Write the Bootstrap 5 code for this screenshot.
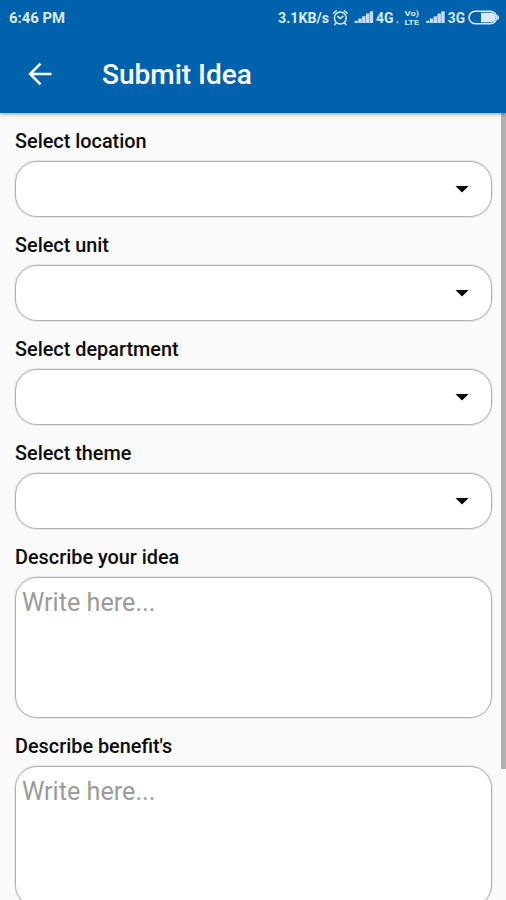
<!DOCTYPE html>
<html lang="en">
<head>
<meta charset="utf-8">
<meta name="viewport" content="width=device-width, initial-scale=1">
<title>Submit Idea</title>
<link rel="stylesheet" href="https://cdn.jsdelivr.net/npm/bootstrap@5.3.0/dist/css/bootstrap.min.css">
<style>
  body { font-family: Roboto, "Liberation Sans", sans-serif; background: #fafafa; color: #111; }
  .screen { height: 900px; }
  .app-top { height: 113px; background: #0062ac; box-shadow: 0 1px 4px rgba(0,0,0,.4); z-index: 2; }
  .status { height: 36px; padding: 0 0 0 9px; font-size: 14.9px; font-weight: 700; line-height: 36px; color: #dcebfa; }
  .status svg { flex: none; }
  .title-bar { height: 77px; padding-left: 28px; }
  .title-bar h1 { font-size: 28px; font-weight: 500; line-height: 32px; margin: 0 0 0 50px; }
  .back { width: 24px; height: 24px; line-height: 0; margin-top: -2px; }
  .form-area { padding: 0 9px 0 15px; }
  .field-label { font-size: 19.85px; font-weight: 500; line-height: 24px; height: 48px; padding: 17px 0 7px 0; margin: 0; color: #0c0c0c; }
  .field-box, .field-box:focus { display: block; width: 100%; background: #fff; border: 1px solid #b2b2b2; border-radius: 22px; box-shadow: 0 0 0 1px #e6e6e6; outline: 0; }
  .select-box { height: 56px; padding-right: 22px; }
  .area-box { height: 141px; resize: none; overflow: hidden; font-size: 25.2px; line-height: 30px; padding: 10px 6px; }
  .area-box::placeholder { color: #9b9b9b; opacity: 1; }
  .scroll-thumb { width: 5px; height: 656px; background: #b1b1b1; flex: none; }
</style>
<script src="https://cdn.jsdelivr.net/npm/bootstrap@5.3.0/dist/js/bootstrap.bundle.min.js"></script>
</head>
<body>
<div class="screen d-flex flex-column overflow-hidden">
  <header class="app-top position-relative flex-shrink-0 text-white">
    <div class="status d-flex justify-content-between">
      <span id="clock">6:46 PM</span>
      <svg width="230" height="36" viewBox="276 0 230 36" fill="#dcebfa" font-family="Roboto, sans-serif" font-weight="700">
        <text x="278" y="23" font-size="13.8" textLength="51" lengthAdjust="spacingAndGlyphs">3.1KB/s</text>
        <g fill="none" stroke="#dcebfa" stroke-width="1.5" stroke-linecap="round">
          <circle cx="340.3" cy="18" r="5.9"/>
          <path d="M333.5 13.3 336.3 10.8M347.1 13.3 344.3 10.8M335.8 23.2 334.6 24.6M344.8 23.2 346 24.6M337.7 16.4 340.3 18.6 342.9 16.4"/>
        </g>
        <g id="bars">
          <path d="M354.5 23v-2.2h3.4V23zM358.3 23v-4.4h3.4V23zM362.1 23v-6.8h3.4v6.8zM365.9 23v-9.4h3.4V23zM369.7 23V11.3h3.4V23z" opacity=".9"/>
        </g>
        <text x="376" y="23" font-size="13.8" textLength="17.5" lengthAdjust="spacingAndGlyphs">4G</text>
        <rect x="396.5" y="21" width="2.2" height="2.2" opacity=".5"/>
        <text x="404.5" y="16.2" font-size="7.2" textLength="14.5" lengthAdjust="spacingAndGlyphs">Vo)</text>
        <text x="404.5" y="24.8" font-size="7.2" textLength="14.5" lengthAdjust="spacingAndGlyphs">LTE</text>
        <use href="#bars" x="71.6"/>
        <text x="447.8" y="23" font-size="13.8" textLength="17.2" lengthAdjust="spacingAndGlyphs">3G</text>
        <rect x="469" y="11.3" width="27.5" height="12.4" rx="6.2" fill="none" stroke="#dcebfa" stroke-width="1.6"/>
        <path d="M481 12.8h10a4.7 4.7 0 0 1 0 9.4H481z"/>
        <path d="M497.4 14.4q3.4 3.1 0 6.2z"/>
      </svg>
    </div>
    <div class="title-bar d-flex align-items-center">
      <button class="back btn p-0 border-0 text-white" type="button" aria-label="Back">
        <svg width="24" height="24" viewBox="0 0 24 24" fill="none" stroke="#fff" stroke-width="2.6"><path d="M23.5 12H2.5M12.5 1.7 2.2 12l10.3 10.3"/></svg>
      </button>
      <h1>Submit Idea</h1>
    </div>
  </header>
  <div class="d-flex flex-grow-1 overflow-hidden">
    <form class="form-area flex-grow-1">
      <label class="field-label d-block">Select location</label>
      <div class="field-box select-box d-flex align-items-center justify-content-end"><svg width="14" height="8" viewBox="0 0 14 8"><path d="M.5 1h13L7 7.6z"/></svg></div>
      <label class="field-label d-block">Select unit</label>
      <div class="field-box select-box d-flex align-items-center justify-content-end"><svg width="14" height="8" viewBox="0 0 14 8"><path d="M.5 1h13L7 7.6z"/></svg></div>
      <label class="field-label d-block">Select department</label>
      <div class="field-box select-box d-flex align-items-center justify-content-end"><svg width="14" height="8" viewBox="0 0 14 8"><path d="M.5 1h13L7 7.6z"/></svg></div>
      <label class="field-label d-block">Select theme</label>
      <div class="field-box select-box d-flex align-items-center justify-content-end"><svg width="14" height="8" viewBox="0 0 14 8"><path d="M.5 1h13L7 7.6z"/></svg></div>
      <label class="field-label d-block" for="idea">Describe your idea</label>
      <textarea class="field-box area-box" id="idea" placeholder="Write here..."></textarea>
      <label class="field-label d-block" for="benefits">Describe benefit's</label>
      <textarea class="field-box area-box" id="benefits" placeholder="Write here..."></textarea>
    </form>
    <div class="scroll-thumb"></div>
  </div>
</div>
</body>
</html>
